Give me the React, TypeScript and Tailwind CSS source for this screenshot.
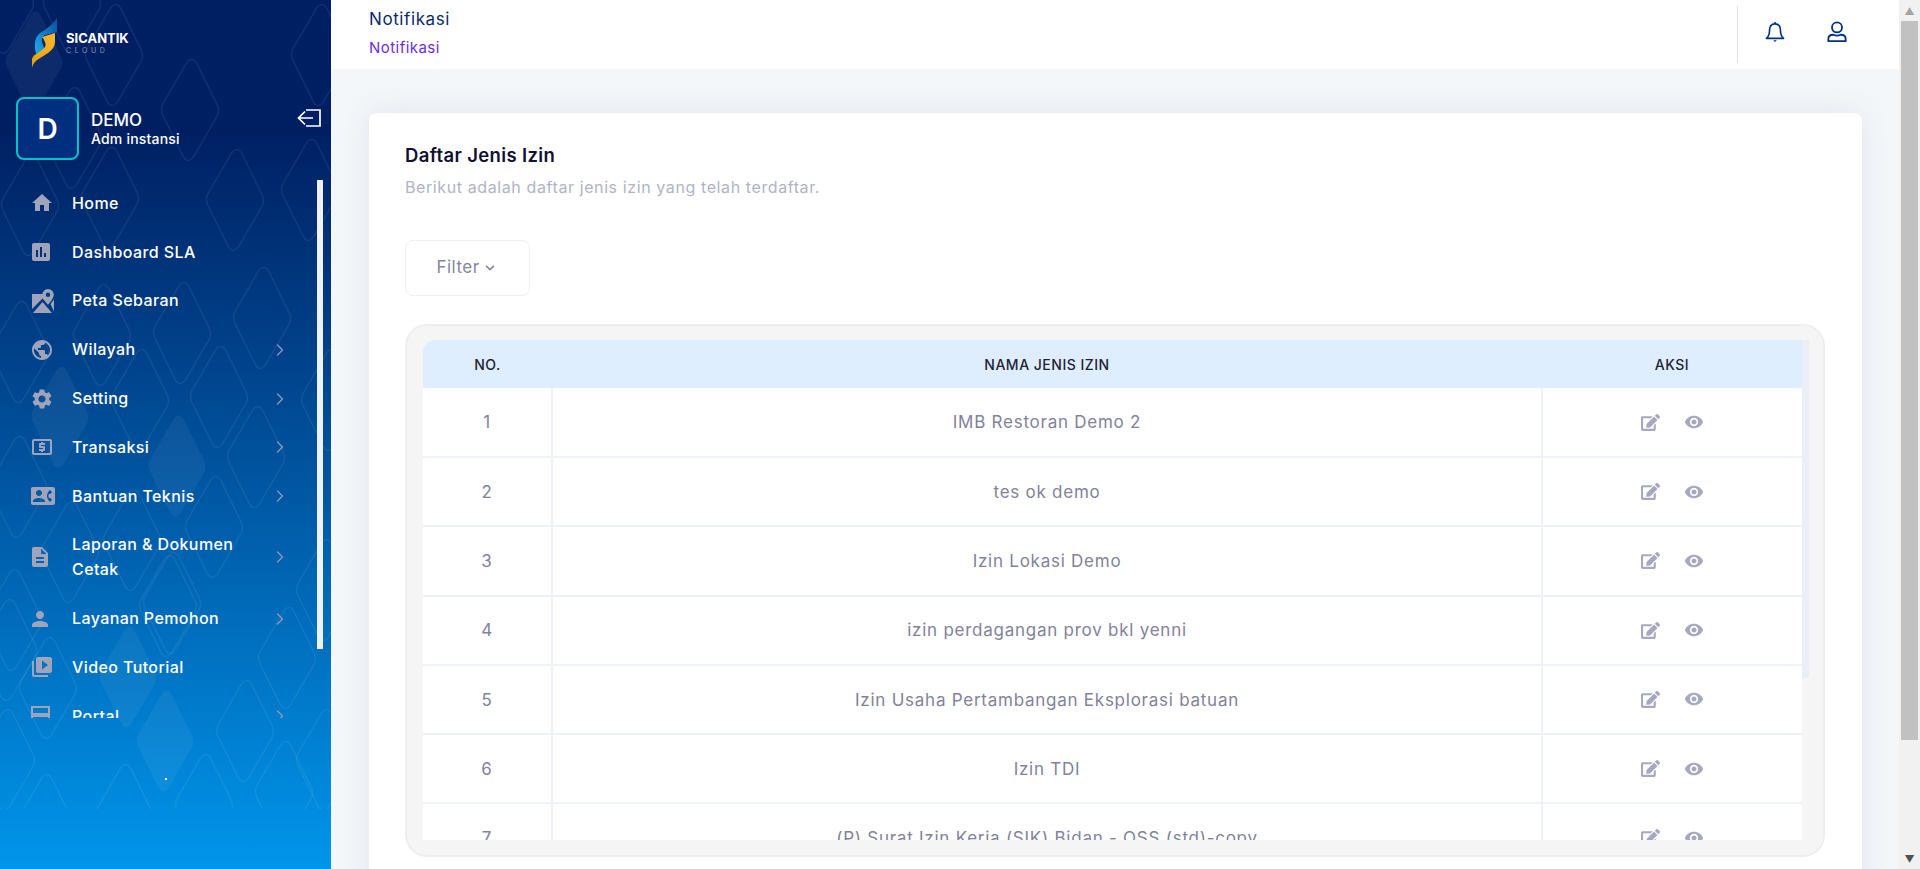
import type { ComponentType } from 'react';
import {
  MdHome,
  MdAssessment,
  MdPublic,
  MdSettings,
  MdLocalAtm,
  MdContactPhone,
  MdDescription,
  MdPerson,
  MdVideoLibrary,
  MdRemoveRedEye,
} from 'react-icons/md';
import { FaEdit, FaChevronDown } from 'react-icons/fa';
import { ChevronRight } from 'lucide-react';

const outlines: [number, number][] = [
  [114, 55], [5, 3], [72, 3], [73, 138], [30, 205], [110, 198], [182, 333], [262, 318], [102, 335], [20, 352],
  [219, 397], [256, 457], [140, 400], [18, 487], [214, 527], [70, 552], [132, 540], [172, 603], [13, 620],
  [48, 688], [245, 731], [287, 658], [168, 606], [8, 650], [6, 760], [45, 825], [124, 815], [204, 805], [284, 792],
  [325, 760], [325, 590], [330, 400], [320, 55], [190, 110], [235, 200], [310, 190],
];
const filled: [number, number][] = [[34, 62], [60, 417], [177, 466], [128, 677], [165, 741]];

const MapPinIcon = ({ size = 24, className }: { size?: number; className?: string }) => (
  <svg className={className} width={size} height={size} viewBox="0 0 24 24" fill="currentColor">
    <path d="M1 5 H12 C12 8 13 10 14.5 12.5 L11.5 9.5 L1 20 Z" />
    <path d="M2 24 L11.5 13 L21 24 Z" />
    <path
      fillRule="evenodd"
      d="M17 0 a5.8 5.8 0 0 0-5.8 5.8 c0 4 5.8 10 5.8 10 s5.8-6 5.8-10 A5.8 5.8 0 0 0 17 0 Z M17 3.6 a2.2 2.2 0 1 1 0 4.4 a2.2 2.2 0 1 1 0-4.4 Z"
    />
    <path d="M19.5 15 L23 10.5 V22.5 Z" />
  </svg>
);

const PortalIcon = ({ size = 24, className }: { size?: number; className?: string }) => (
  <svg className={className} width={size} height={size} viewBox="0 0 24 24" fill="currentColor">
    <path
      fillRule="evenodd"
      d="M1 2 H20 V22 H1 Z M3 4 V9 H18 V4 Z M3 13 V20 H18 V13 Z"
    />
  </svg>
);

type MenuItem = {
  label: string;
  icon: ComponentType<{ size?: number; className?: string }>;
  sub?: boolean;
  nudge?: string;
};

const menu: MenuItem[] = [
  { label: 'Home', icon: MdHome },
  { label: 'Dashboard SLA', icon: MdAssessment, nudge: '-ml-[1px]' },
  { label: 'Peta Sebaran', icon: MapPinIcon, nudge: 'ml-[1px]' },
  { label: 'Wilayah', icon: MdPublic, sub: true },
  { label: 'Setting', icon: MdSettings, sub: true },
  { label: 'Transaksi', icon: MdLocalAtm, sub: true },
  { label: 'Bantuan Teknis', icon: MdContactPhone, sub: true, nudge: 'ml-[1px]' },
  { label: 'Laporan & Dokumen Cetak', icon: MdDescription, sub: true, nudge: '-ml-[2px]' },
  { label: 'Layanan Pemohon', icon: MdPerson, sub: true, nudge: '-ml-[2px]' },
  { label: 'Video Tutorial', icon: MdVideoLibrary },
  { label: 'Portal', icon: PortalIcon, sub: true },
];

const rows = [
  'IMB Restoran Demo 2',
  'tes ok demo',
  'Izin Lokasi Demo',
  'izin perdagangan prov bkl yenni',
  'Izin Usaha Pertambangan Eksplorasi batuan',
  'Izin TDI',
  '(P) Surat Izin Kerja (SIK) Bidan - OSS (std)-copy',
];

const Pattern = () => (
  <svg className="absolute left-0 top-0" width="331" height="809" viewBox="0 0 331 809" fill="none">
    {outlines.map(([x, y]) => (
      <path
        key={`${x}-${y}`}
        transform={`translate(${x} ${y}) rotate(2)`}
        d="M-5 -47 Q0 -54 5 -47 L27 -6 Q30 0 27 6 L5 47 Q0 54 -5 47 L-27 6 Q-30 0 -27 -6 Z"
        stroke="#ffffff"
        strokeOpacity="0.07"
        strokeWidth="1.5"
      />
    ))}
    {filled.map(([x, y]) => (
      <path
        key={`${x}-${y}`}
        transform={`translate(${x} ${y}) rotate(2)`}
        d="M-5 -47 Q0 -54 5 -47 L27 -6 Q30 0 27 6 L5 47 Q0 54 -5 47 L-27 6 Q-30 0 -27 -6 Z"
        fill="#ffffff"
        fillOpacity="0.05"
      />
    ))}
  </svg>
);

const Logo = () => (
  <svg width="28" height="50" viewBox="0 0 28 50">
    <defs>
      <linearGradient id="lg-blue" x1="0" y1="1" x2="1" y2="0">
        <stop offset="0" stopColor="#1fb0f2" />
        <stop offset="1" stopColor="#0b4f9e" />
      </linearGradient>
      <linearGradient id="lg-gold" x1="0" y1="1" x2="1" y2="0">
        <stop offset="0" stopColor="#e0a40c" />
        <stop offset="1" stopColor="#ffb52e" />
      </linearGradient>
    </defs>
    <path d="M26 0 V14 L14 17 Q10 19 11 24 L13 30 L8 40 Q3 34 4 26 Q4 19 9 15 Q20 9 26 0 Z" fill="url(#lg-blue)" />
    <path d="M11 19 L24 15 V24 Q24 30 17 35 L6 42 Q2 45 1 50 V41 Q2 37 7 35 L12 31 Q16 28 14 24 Q13 21 11 19 Z" fill="url(#lg-gold)" />
  </svg>
);

export default function App() {
  return (
    <div className="flex h-screen w-full overflow-hidden bg-[#f4f7fa] font-['Inter',sans-serif]">
      <aside className="relative flex w-[331px] shrink-0 flex-col overflow-hidden bg-gradient-to-b from-[#001f63] from-15% to-[#0096eb]">
        <Pattern />
        <div className="relative flex h-[97px] items-start pl-[31px] pt-[18px]">
          <Logo />
          <div className="ml-[7px] mt-[13px]">
            <div className="text-[13px] font-bold leading-[14px] text-white">SICANTIK</div>
            <div className="text-[7px] leading-[11px] tracking-[3.6px] text-[#8794b0]">CLOUD</div>
          </div>
        </div>
        <div className="relative flex items-center pl-4 pr-[9px]">
          <div className="flex h-[63px] w-[63px] items-center justify-center rounded-lg border-2 border-[#00c4cc] bg-[#002f80] text-[28px] font-semibold text-white">
            D
          </div>
          <div className="ml-3 flex-1 text-white">
            <div className="text-[17px] font-medium leading-[20px]">DEMO</div>
            <div className="text-[14px] font-medium leading-[18px] tracking-[0.2px]">Adm instansi</div>
          </div>
          <svg className="mb-[22px]" width="26" height="20" viewBox="0 0 26 20" fill="none" stroke="#ffffff" strokeWidth="1.7">
            <path d="M10 2 H24 V18 H10" />
            <path d="M17 10 H3 M9 3.5 L2.5 10 L9 16.5" />
          </svg>
        </div>
        <div className="relative mt-[18px] h-[540px] shrink-0 overflow-hidden">
          <div className="absolute right-[8px] top-[2px] h-[469px] w-[6px] bg-[#eff1f5]" />
          <nav className="flex flex-col pl-[30px] pr-[41px] pt-[1px]">
            {menu.map(({ label, icon: Icon, sub, nudge }) => (
              <div key={label} className="flex items-center py-[11.9px] text-[16px] font-medium leading-[25px] tracking-[0.4px] text-white">
                <div className="w-[42px] shrink-0">
                  <Icon size={24} className={`text-[#9fa4bb] ${nudge ?? ''}`} />
                </div>
                <span className="flex-1 pr-[20px]">{label}</span>
                {sub && <ChevronRight className="shrink-0 text-[#8f98b4]" size={20} strokeWidth={1.6} />}
              </div>
            ))}
          </nav>
        </div>
        <div className="relative ml-[165px] mt-[60px] h-[2px] w-[2px] bg-white" />
      </aside>

      <div className="flex min-w-0 flex-1 flex-col">
        <header className="flex h-[69px] shrink-0 items-center bg-white pl-[38px]">
          <div className="mb-[5px] flex-1">
            <div className="text-[17px] leading-[24px] tracking-[0.6px] text-[#0b2a6f]">Notifikasi</div>
            <div className="mt-[7px] text-[15px] leading-[20px] tracking-[0.45px] text-[#6a2ee8]">Notifikasi</div>
          </div>
          <div className="flex h-[57px] w-[162px] items-center border-l border-[#e0e3e8] pl-[27px]">
            <svg className="mb-[5px]" width="20" height="22" viewBox="0 0 22 24" fill="none" stroke="#003087" strokeWidth="1.8" strokeLinejoin="round">
              <path d="M11 3 C6.5 3 5 6.5 5 10 C5 15 4 17 1.5 19 H20.5 C18 17 17 15 17 10 C17 6.5 15.5 3 11 3 Z" />
              <path d="M11 1 V3" />
              <path d="M9 21 H13 L11 23 Z" fill="#003087" stroke="none" />
            </svg>
            <svg className="mb-[5px] ml-[42px]" width="20" height="22" viewBox="0 0 22 24" fill="none" stroke="#003087" strokeWidth="2">
              <circle cx="11" cy="7" r="5.5" />
              <path d="M1.5 22 V19.5 C1.5 16.5 4 15 7 15 C9 16 13 16 15 15 C18 15 20.5 16.5 20.5 19.5 V22 Z" />
            </svg>
          </div>
        </header>

        <main className="min-h-0 flex-1 overflow-hidden pl-[38px] pr-[37px] pt-[44px]">
          <div className="h-[800px] rounded-lg bg-white pl-[36px] pr-[37px] pt-[28px] shadow-[0_0_30px_rgba(60,70,90,0.1)]">
            <h2 className="text-[18.5px] font-semibold leading-[28px] tracking-[0.35px] text-[#0f1033]">Daftar Jenis Izin</h2>
            <p className="mt-[6px] text-[16px] leading-[24px] tracking-[0.6px] text-[#b0b3c6]">Berikut adalah daftar jenis izin yang telah terdaftar.</p>
            <button className="mt-[41px] flex h-[56px] w-[125px] items-center justify-center rounded-lg border border-[#f0f0f3] pr-[4px] text-[17px] tracking-[0.5px] text-[#85859e]">
              Filter
              <FaChevronDown size={10} className="ml-[5px]" />
            </button>
            <div className="mt-[28px] flex h-[533px] rounded-[22px] border-2 border-[#eeeeee] bg-[#f5f5f5] pb-[15px] pl-[16px] pr-[14px] pt-[14px]">
              <div className="flex-1 overflow-hidden rounded-tl-xl bg-white">
                <table className="w-full table-fixed border-collapse">
                  <thead>
                    <tr className="h-[48px] bg-[#deeefe] text-[14px] text-[#1f2233]">
                      <th className="w-[129px] font-medium tracking-[0.5px]">NO.</th>
                      <th className="font-medium tracking-[0.5px]">NAMA JENIS IZIN</th>
                      <th className="w-[260px] font-medium tracking-[0.5px]">AKSI</th>
                    </tr>
                  </thead>
                  <tbody>
                    {rows.map((name, i) => (
                      <tr key={name} className="h-[69.2px] border-b-2 border-[#eef2f7] text-center text-[17px] tracking-[0.75px] text-[#82829a]">
                        <td className="border-r-2 border-[#eef2f7] pt-[2px]">{i + 1}</td>
                        <td className="whitespace-nowrap border-r-2 border-[#eef2f7] pt-[2px]">{name}</td>
                        <td>
                          <div className="flex items-center justify-center gap-[24px] text-[#a6a8bf]">
                            <FaEdit size={19} />
                            <MdRemoveRedEye size={20} />
                          </div>
                        </td>
                      </tr>
                    ))}
                  </tbody>
                </table>
              </div>
              <div className="h-[338px] w-[7px] bg-[#e9eff5]" />
            </div>
          </div>
        </main>
      </div>

      <div className="flex w-[21px] shrink-0 flex-col items-center bg-[#f1f1f1]">
        <div className="flex h-[21px] items-center justify-center text-[10px] leading-none text-[#a3a3a3]">▲</div>
        <div className="h-[719px] w-[17px] bg-[#c1c1c1]" />
        <div className="mt-auto flex h-[21px] items-center justify-center text-[10px] leading-none text-[#505050]">▼</div>
      </div>
    </div>
  );
}
